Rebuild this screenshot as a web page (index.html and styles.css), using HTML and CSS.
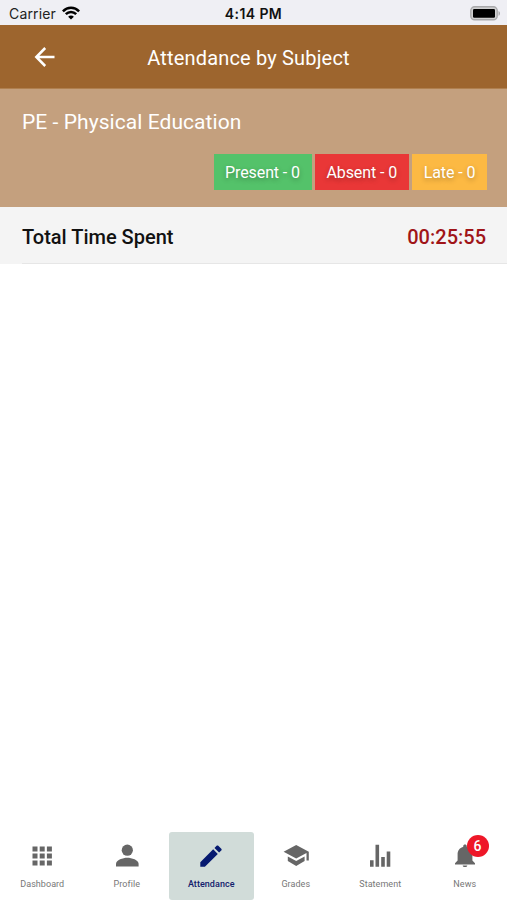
FILE: index.html
```html
<!DOCTYPE html>
<html lang="en">
<head>
<meta charset="utf-8">
<title>Attendance by Subject</title>
<link rel="stylesheet" href="styles.css">
</head>
<body>
<div class="status">
  <div class="carrier"><span>Carrier</span>
    <svg width="18" height="14" viewBox="0 0 18 14" fill="none" stroke="#000" stroke-width="2.5"><path d="M.9 5.3C5.5.6 12.500.6 17.100 5.300M3.800 8.200c3-3 7.400-3 10.400 0"/><path d="M9 13.500 6.100 10.700c1.600-1.500 4.200-1.500 5.800 0z" fill="#000" stroke="none"/></svg>
  </div>
  <div class="clock">4:14 PM</div>
  <svg class="battery" width="31" height="15" viewBox="0 0 31 15"><rect x=".8" y=".8" width="26.400" height="13" rx="3.800" fill="#d0d0d1" stroke="#a9a9ab" stroke-width="1.400"/><rect x="3" y="3" width="22" height="8.800" rx="1.200"/><path d="M28.500 5c2 .8 2 4 0 4.800z" fill="#a9a9ab"/></svg>
</div>
<header class="bar">
  <svg class="back" width="22" height="22" viewBox="0 0 22 22" fill="none" stroke="#fff" stroke-width="2.500"><path d="M20.500 11H3M11.200 2 2.300 11l8.900 9"/></svg>
  <h1>Attendance by Subject</h1>
</header>
<section class="subject">
  <h2>PE - Physical Education</h2>
  <div class="chips">
    <span class="chip present">Present - 0</span>
    <span class="chip absent">Absent - 0</span>
    <span class="chip late">Late - 0</span>
  </div>
</section>
<div class="total"><div class="total-row"><span>Total Time Spent</span><span class="time">00:25:55</span></div></div>
<main></main>
<nav class="tabs">
  <div class="tab">
    <svg viewBox="0 0 30 30"><path d="M5.500 5.500h5v5h-5zm7.200 0h5v5h-5zm7.200 0h5v5h-5zm-14.400 7h5v5h-5zm7.200 0h5v5h-5zm7.200 0h5v5h-5zm-14.400 7h5v5h-5zm7.200 0h5v5h-5zm7.200 0h5v5h-5z"/></svg>
    <span>Dashboard</span>
  </div>
  <div class="tab">
    <svg viewBox="0 0 30 30"><circle cx="15.300" cy="9.200" r="5.600"/><path d="M4 25.500v-2.700c0-3.800 7-6 11.300-6s11.300 2.200 11.300 6v2.700z"/></svg>
    <span>Profile</span>
  </div>
  <div class="tab active">
    <svg viewBox="0 0 30 30"><path d="M4.300 21.200 17.200 8.300l4.600 4.600L8.900 25.800H4.300zM18.500 7l2.100-2.200c.5-.5 1.200-.5 1.700 0l3 3c.5.500.5 1.200 0 1.700l-2.200 2.100z"/></svg>
    <span>Attendance</span>
  </div>
  <div class="tab">
    <svg viewBox="0 0 30 30"><path d="M15.200 4 2.600 10.700l12.600 6.700 10.300-5.500v7.600h2.300v-8.800zM6.800 15.500v4.600l8.400 4.900 8.400-4.900v-4.600l-8.400 4.600z"/></svg>
    <span>Grades</span>
  </div>
  <div class="tab">
    <svg viewBox="0 0 30 30"><path d="M5 19.200h3.600v6.600H5zM10.500 3.800h3.600v22h-3.600zM16.200 16h3.600v9.800h-3.600zM21.700 10.400h3.600v15.400h-3.600z"/></svg>
    <span>Statement</span>
  </div>
  <div class="tab">
    <svg viewBox="0 0 30 30"><path d="M15 26c1.300 0 2.200-.6 2.300-1.600h-4.600c.1 1 1 1.600 2.300 1.600zM22.400 19.500v-6.200c0-4-2.400-6.700-5.600-7.400v-.8c0-2.200-3.600-2.200-3.600 0v.8c-3.300.7-5.600 3.500-5.600 7.400v6.200L5 22.200v1.200h20v-1.200z"/></svg>
    <span>News</span>
    <b class="badge">6</b>
  </div>
</nav>
</body>
</html>
```
FILE: styles.css
```css
* { box-sizing: border-box; }
body {
  margin: 0;
  height: 900px;
  display: flex;
  flex-direction: column;
  overflow: hidden;
  background: #fff;
  font-family: Roboto, "Liberation Sans", sans-serif;
}
h1, h2 { margin: 0; font-weight: 400; color: #fff; }
.status {
  height: 25px;
  display: grid;
  grid-template-columns: 1fr auto 1fr;
  align-items: center;
  padding: 1px 6px 0 9px;
  background: #efeff4;
  font-family: Inter, sans-serif;
  font-size: 14px;
  color: #222;
}
.carrier { display: flex; align-items: center; gap: 6px; letter-spacing: .15px; }
.clock { font-weight: 600; color: #111; padding-right: 3px; letter-spacing: .4px; }
.battery { justify-self: end; }
.bar {
  height: 64px;
  display: grid;
  grid-template-columns: 80px 1fr 80px;
  align-items: center;
  background: #9d652e;
  border-bottom: 1px solid #b0804f;
}
.back { margin-left: 34px; }
h1 { text-align: center; font-size: 20px; letter-spacing: .17px; line-height: 24px; padding: 2px 10px 0 0; white-space: nowrap; }
.subject {
  height: 118px;
  padding: 21px 20px 0 22px;
  background: #c4a07e;
}
h2 { font-size: 21px; letter-spacing: .06px; line-height: 24px; }
.chips { display: flex; justify-content: flex-end; gap: 3.500px; margin-top: 20px; }
.chip {
  height: 36px;
  line-height: 37px;
  text-align: center;
  color: #fff;
  font-size: 16px;
  letter-spacing: -.1px;
  text-shadow: 0 2px 5px rgba(0, 0, 0, .3);
}
.present { width: 98px; background: #54c26a; }
.absent { width: 93.500px; background: #e93737; }
.late { width: 75px; background: #fcb943; }
.total { height: 57px; padding-left: 22px; background: #f4f4f4; }
.total-row {
  height: 57px;
  display: flex;
  justify-content: space-between;
  padding: 0 21px 0 0;
  border-bottom: 1px solid #e6e6e6;
  line-height: 60px;
  font-size: 20px;
  font-weight: 500;
  color: #111;
}
.time { color: #a01418; }
main { flex: 1; }
.tabs { height: 68px; display: grid; grid-template-columns: repeat(6, 1fr); }
.tab {
  position: relative;
  display: flex;
  flex-direction: column;
  align-items: center;
  padding-top: 9px;
  font-size: 9px;
  line-height: 12px;
  color: #777;
}
.tab svg { width: 30px; height: 30px; fill: #666; }
.tab span { margin-top: 7px; letter-spacing: .05px; }
.active { background: #d1dcd9; border-radius: 3px; color: #12206c; font-weight: 500; }
.tab.active svg { fill: #061a70; }
.badge {
  position: absolute;
  left: 44px;
  top: 3px;
  width: 22px;
  height: 22px;
  border-radius: 50%;
  background: #ee1728;
  color: #fff;
  font-size: 14px;
  font-weight: 500;
  line-height: 23px;
  text-align: center;
}
```
